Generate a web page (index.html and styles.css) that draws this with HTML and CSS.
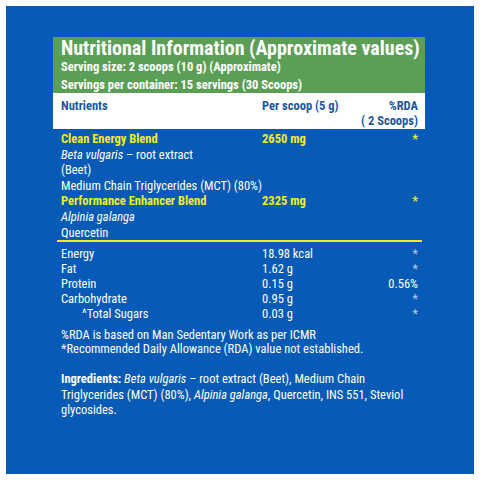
FILE: index.html
```html
<!DOCTYPE html>
<html>
<head>
    <title>Nutritional Information</title>
    <link rel="stylesheet" href="styles.css">
</head>
<body>
    <div class="panel">
        <div class="facts">
            <div class="facts-head">
                <h1>Nutritional Information (Approximate values)</h1>
                <div class="serving">Serving size: 2 scoops (10 g) (Approximate)</div>
                <div class="serving">Servings per container: 15 servings (30 Scoops)</div>
            </div>

            <div class="cols-head">
                <div>Nutrients</div>
                <div>Per scoop (5 g)</div>
                <div class="rda">%RDA<br>( 2 Scoops)</div>
            </div>

            <div class="blends">
                <div class="row blend">
                    <div>Clean Energy Blend</div>
                    <div>2650 mg</div>
                    <div class="rda">*</div>
                </div>
                <div class="row"><div><i>Beta vulgaris</i> – root extract<br>(Beet)</div></div>
                <div class="row"><div class="wide">Medium Chain Triglycerides (MCT) (80%)</div></div>
                <div class="row blend">
                    <div>Performance Enhancer Blend</div>
                    <div>2325 mg</div>
                    <div class="rda">*</div>
                </div>
                <div class="row"><div><i>Alpinia galanga</i></div></div>
                <div class="row"><div>Quercetin</div></div>
            </div>

            <div class="values">
                <div class="row"><div>Energy</div><div>18.98 kcal</div><div class="rda star">*</div></div>
                <div class="row"><div>Fat</div><div>1.62 g</div><div class="rda star">*</div></div>
                <div class="row"><div>Protein</div><div>0.15 g</div><div class="rda">0.56%</div></div>
                <div class="row"><div>Carbohydrate</div><div>0.95 g</div><div class="rda star">*</div></div>
                <div class="row"><div class="sub">^Total Sugars</div><div>0.03 g</div><div class="rda star">*</div></div>
            </div>

            <div class="notes">
                %RDA is based on Man Sedentary Work as per ICMR<br>
                *Recommended Daily Allowance (RDA) value not established.
            </div>

            <div class="ingredients">
                <b>Ingredients:</b> <i>Beta vulgaris</i> – root extract (Beet), Medium Chain
                Triglycerides (MCT) (80%), <i>Alpinia galanga</i>, Quercetin, INS 551, Steviol
                glycosides.
            </div>
        </div>
    </div>
</body>
</html>
```

FILE: styles.css
```css
body {
    margin: 0;
    padding: 6px;
    background-color: #ffffff;
    font-family: "Roboto Condensed", "Liberation Sans Narrow", "DejaVu Sans", sans-serif;
    font-stretch: condensed;
}
.panel {
    width: 468px;
    height: 468px;
    box-sizing: border-box;
    background-color: #075bb6;
    padding: 31px 0 0 47px;
    color: #ffffff;
}
.facts {
    width: 372px;
    font-size: 12.5px;
    line-height: 15.6px;
}
.facts-head {
    background-color: #5a9f55;
    padding: 1px 7px 0 8px;
    font-weight: bold;
}
.facts-head h1 {
    margin: 0;
    font-size: 20px;
    line-height: 20px;
    white-space: nowrap;
}
.serving {
    line-height: 17.5px;
}
.cols-head {
    background-color: #ffffff;
    color: #1b56a3;
    font-weight: bold;
    line-height: 15px;
    display: grid;
    grid-template-columns: 201px 1fr auto;
    padding: 5px 7px 1px 8px;
}
.rda {
    text-align: right;
}
.row {
    display: grid;
    grid-template-columns: 201px 1fr auto;
}
.wide {
    grid-column: 1 / 3;
}
.blend {
    color: #f3ec22;
    font-weight: bold;
}
.blends {
    border-bottom: 2px solid #f3ec22;
    margin: 0 3px 0 4px;
    padding: 2px 4px 0 4px;
}
.values {
    line-height: 15px;
    padding: 4px 7px 0 8px;
}
.star {
    color: #b9c9e6;
}
.sub {
    padding-left: 21px;
}
.notes {
    line-height: 14px;
    padding: 7px 7px 0 8px;
}
.ingredients {
    line-height: 15.5px;
    padding: 15px 11px 0 8px;
}
```
